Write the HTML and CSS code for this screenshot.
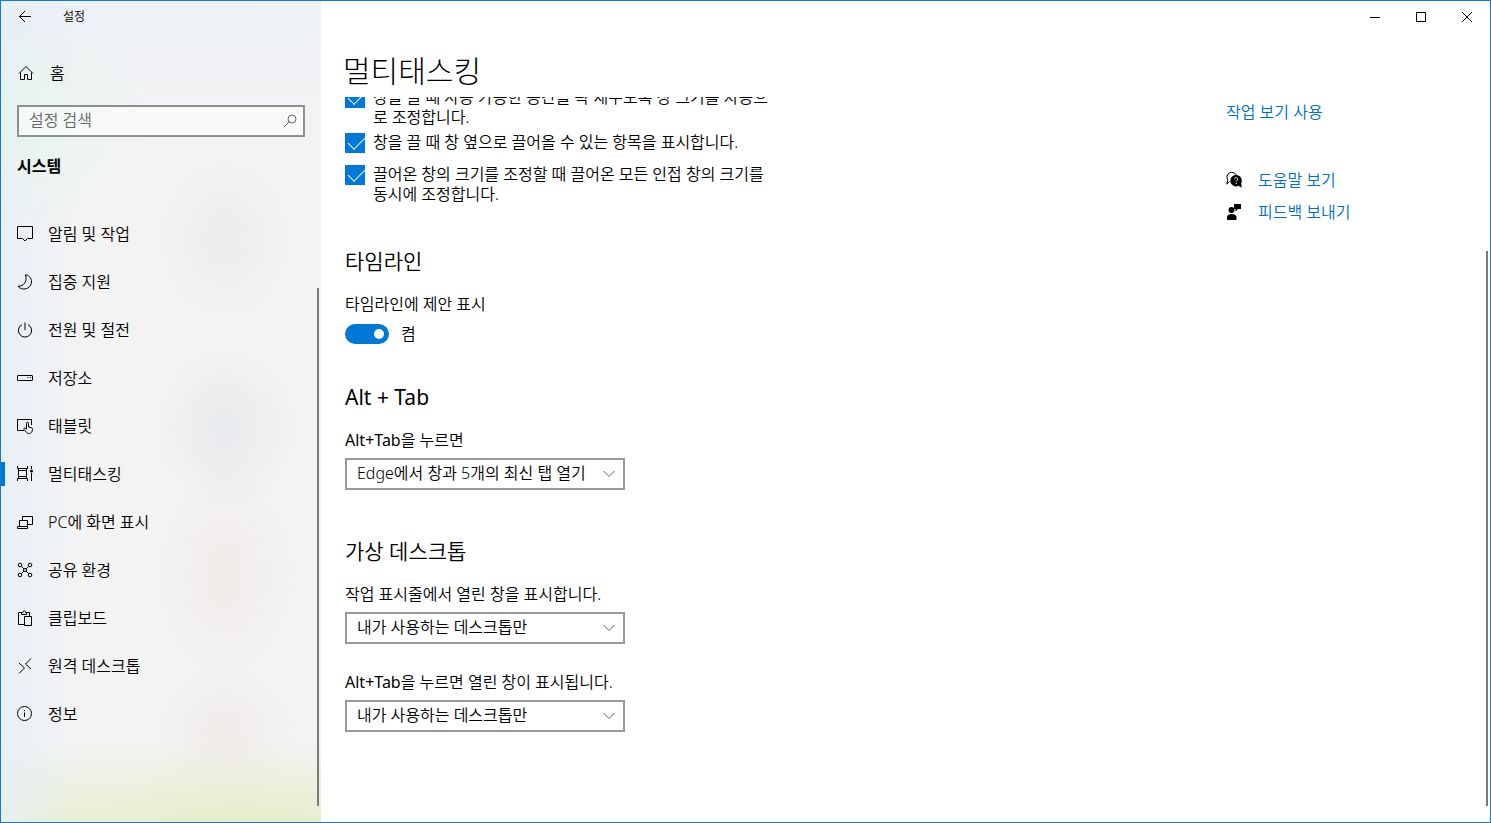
FILE: index.html
```
<!DOCTYPE html>
<html lang="ko">

<head>
    <meta charset="UTF-8">
    <meta name="viewport" content="width=device-width, initial-scale=1.0">
    <title>설정</title>
    <link rel="stylesheet" href="styles.css">
</head>

<body>
    <div class="window">
        <aside class="sidebar">
            <div class="titlebar">
                <button class="back-button" aria-label="뒤로">
                    <svg class="icon" viewBox="0 0 16 16"><path d="M14 7.5H2.5M8 2L2.5 7.5L8 13" /></svg>
                </button>
                <span class="app-name">설정</span>
            </div>

            <a class="home-link" href="#">
                <svg class="icon" viewBox="0 0 16 16"><path d="M1 8.5L8 1.5L15 8.5M2.5 7.5V14.5H6.5V9.5H9.5V14.5H13.5V7.5" /></svg>
                <span>홈</span>
            </a>

            <div class="search">
                <input type="text" class="search-input" placeholder="설정 검색" aria-label="설정 검색">
                <svg class="search-icon" viewBox="0 0 16 16"><circle cx="10" cy="6" r="4" /><path d="M7.2 8.8L2 14" /></svg>
            </div>

            <h2 class="nav-title">시스템</h2>

            <nav class="nav">
                <a class="nav-item" href="#">
                    <svg class="icon" viewBox="0 0 16 16"><path d="M.5 .5H15.5V12.5H10.5L8 15L5.5 12.5H.5Z" /></svg>
                    <span>알림 및 작업</span>
                </a>
                <a class="nav-item" href="#">
                    <svg class="icon" viewBox="0 0 16 16"><path d="M8.5 .8C13 1.5 15.3 5.5 14.3 9.5C13 15 5 17.3 1 12.2C7 12.5 10.5 7 8.5 .8Z" /></svg>
                    <span>집중 지원</span>
                </a>
                <a class="nav-item" href="#">
                    <svg class="icon" viewBox="0 0 16 16"><path d="M8 .5V8M5 2.6A6.6 6.6 0 1 0 11 2.6" /></svg>
                    <span>전원 및 절전</span>
                </a>
                <a class="nav-item" href="#">
                    <svg class="icon" viewBox="0 0 16 16"><rect x=".5" y="5.5" width="15" height="5" rx=".5" /><path d="M10.5 7.5H11.5M12.8 7.5H13.8" /></svg>
                    <span>저장소</span>
                </a>
                <a class="nav-item" href="#">
                    <svg class="icon" viewBox="0 0 16 16"><path d="M7 12.5H.5V1.5H14.5V7" /><path d="M9.5 11V5.2C9.5 3.8 11.5 3.8 11.5 5.2V9L14.5 9.7C15.3 10 15.6 10.5 15.5 11.3L15 13.5C14.3 15.9 10.5 16 9.3 14.3L7 11.3C6.5 10.3 7.6 9.6 8.3 10.2L9.5 11.3" /></svg>
                    <span>태블릿</span>
                </a>
                <a class="nav-item active" href="#">
                    <svg class="icon" viewBox="0 0 16 16"><path d="M.5 0V2.5H10.5V0M1.5 2.5V12.5M9.5 2.5V12.5M1.5 4.5H9.5M1.5 10.5H9.5M.5 15V12.5H10.5V15M14.5 0V3M14.5 7V15" /><circle cx="14.5" cy="5" r="1.5" class="solid" /></svg>
                    <span>멀티태스킹</span>
                </a>
                <a class="nav-item" href="#">
                    <svg class="icon" viewBox="0 0 16 16"><path d="M5.5 6V2.5H15.5V10.5H10.5M2.5 12V6.5H10.5V12M.5 12.5H10.5V14.5H.5Z" /></svg>
                    <span>PC에 화면 표시</span>
                </a>
                <a class="nav-item" href="#">
                    <svg class="icon" viewBox="0 0 16 16"><circle cx="3" cy="3" r="1.8" /><circle cx="13" cy="3" r="1.8" /><circle cx="3" cy="13" r="1.8" /><circle cx="13" cy="13" r="1.8" /><circle cx="8" cy="8" r="1.5" /><path d="M4.3 4.3L7 7M11.7 4.3L9 7M4.3 11.7L7 9M11.7 11.7L9 9" /></svg>
                    <span>공유 환경</span>
                </a>
                <a class="nav-item" href="#">
                    <svg class="icon" viewBox="0 0 16 16"><path d="M7 14.5H1.5V2.5H4.5M9.5 2.5H12.5V6M4.5 4.5V2.5H6C6 0 8.5 0 8.5 2.5H9.5V4.5ZM7.5 6.5H14.5V15.5H7.5Z" /></svg>
                    <span>클립보드</span>
                </a>
                <a class="nav-item" href="#">
                    <svg class="icon" viewBox="0 0 16 16"><path d="M2 5L7.5 10L2 15.5M14 .5L8.5 6L14 11" /></svg>
                    <span>원격 데스크톱</span>
                </a>
                <a class="nav-item" href="#">
                    <svg class="icon" viewBox="0 0 16 16"><circle cx="7.5" cy="7.5" r="7" /><path d="M7.5 6.5V11M7.5 4V5.2" /></svg>
                    <span>정보</span>
                </a>
            </nav>
            <div class="scroll-thumb nav-thumb"></div>
        </aside>

        <main class="main">
            <div class="window-controls">
                <button class="window-button" aria-label="최소화">
                    <svg viewBox="0 0 10 10"><path d="M0 5.5H10" /></svg>
                </button>
                <button class="window-button" aria-label="최대화">
                    <svg viewBox="0 0 10 10"><path d="M.5 .5H9.5V9.5H.5Z" /></svg>
                </button>
                <button class="window-button" aria-label="닫기">
                    <svg viewBox="0 0 10 10"><path d="M0 0L10 10M10 0L0 10" /></svg>
                </button>
            </div>

            <h1 class="page-title">멀티태스킹</h1>

            <div class="page">
                <div class="settings">
                    <div class="check-list">
                        <label class="check-item">
                            <input type="checkbox" class="checkbox" checked>
                            <span>창을 끌 때 사용 가능한 공간을 꽉 채우도록 창 크기를 자동으로 조정합니다.</span>
                        </label>
                        <label class="check-item">
                            <input type="checkbox" class="checkbox" checked>
                            <span>창을 끌 때 창 옆으로 끌어올 수 있는 항목을 표시합니다.</span>
                        </label>
                        <label class="check-item">
                            <input type="checkbox" class="checkbox" checked>
                            <span>끌어온 창의 크기를 조정할 때 끌어온 모든 인접 창의 크기를 동시에 조정합니다.</span>
                        </label>
                    </div>

                    <section class="section">
                        <h2 class="section-title">타임라인</h2>
                        <label class="field-label" for="timelineToggle">타임라인에 제안 표시</label>
                        <div class="toggle-row">
                            <input type="checkbox" role="switch" class="toggle" id="timelineToggle" checked>
                            <span>켬</span>
                        </div>
                    </section>

                    <section class="section">
                        <h2 class="section-title latin">Alt + Tab</h2>
                        <div class="field">
                            <label class="field-label" for="altTab"><span class="latin">Alt+Tab</span>을 누르면</label>
                            <div class="select-box">
                                <select id="altTab" class="select">
                                    <option>Edge에서 창과 5개의 최신 탭 열기</option>
                                </select>
                                <svg class="chevron" viewBox="0 0 12 8"><path d="M.5 1L6 6.5L11.5 1" /></svg>
                            </div>
                        </div>
                    </section>

                    <section class="section">
                        <h2 class="section-title">가상 데스크톱</h2>
                        <div class="field">
                            <label class="field-label" for="taskbarWindows">작업 표시줄에서 열린 창을 표시합니다.</label>
                            <div class="select-box">
                                <select id="taskbarWindows" class="select">
                                    <option>내가 사용하는 데스크톱만</option>
                                </select>
                                <svg class="chevron" viewBox="0 0 12 8"><path d="M.5 1L6 6.5L11.5 1" /></svg>
                            </div>
                        </div>
                        <div class="field">
                            <label class="field-label" for="altTabWindows"><span class="latin">Alt+Tab</span>을 누르면 열린 창이 표시됩니다.</label>
                            <div class="select-box">
                                <select id="altTabWindows" class="select">
                                    <option>내가 사용하는 데스크톱만</option>
                                </select>
                                <svg class="chevron" viewBox="0 0 12 8"><path d="M.5 1L6 6.5L11.5 1" /></svg>
                            </div>
                        </div>
                    </section>
                </div>

                <div class="links">
                    <a class="link" href="#">작업 보기 사용</a>
                    <div class="support">
                        <a class="link" href="#">
                            <svg class="icon" viewBox="0 0 16 16">
                                <path d="M3.6 9.3L.8 12.2L1.8 8A4.9 4.9 0 1 1 10.3 3.2" />
                                <path class="solid" d="M10.2 3A5.7 5.7 0 0 1 15.2 11.2L15.8 15.7L12.5 13.8A5.7 5.7 0 1 1 10.2 3Z" />
                                <path class="mark" d="M8.6 7C8.6 5 11.9 5 11.9 7C11.9 8.2 10.3 8.2 10.3 9.6M10.3 10.8V12" />
                            </svg>
                            <span>도움말 보기</span>
                        </a>
                        <a class="link" href="#">
                            <svg class="icon" viewBox="0 0 16 16">
                                <path class="fill" d="M8 0H15V5H12L9.5 7.5V5H8Z" />
                                <circle class="fill" cx="5.5" cy="6" r="3" />
                                <path class="fill" d="M1 16V13C1 9 10.5 9 10.5 13V16Z" />
                            </svg>
                            <span>피드백 보내기</span>
                        </a>
                    </div>
                </div>
            </div>
            <div class="scroll-thumb page-thumb"></div>
        </main>
    </div>
</body>

</html>
```

FILE: styles.css
```
* {
    box-sizing: border-box;
    margin: 0;
    padding: 0;
}

body {
    background-color: #fff;
    color: #000;
    font-family: 'Noto Sans', 'Noto Sans CJK KR', sans-serif;
    font-size: 16px;
    font-weight: 350;
    line-height: 20px;
}

a {
    color: inherit;
    text-decoration: none;
}

button {
    background: none;
    border: none;
}

input,
select {
    font: inherit;
}

svg {
    fill: none;
    stroke: currentColor;
    stroke-width: 1;
    flex-shrink: 0;
}

.icon {
    width: 16px;
    height: 16px;
    overflow: visible;
}

.window {
    display: flex;
    height: 100vh;
    border: 1px solid #1979ca;
    overflow: hidden;
}

/* Sidebar */
.sidebar {
    position: relative;
    flex: 0 0 320px;
    background-color: #f3f3f4;
    background-image:
        radial-gradient(ellipse 150px 70px at 75% 100%, rgba(230, 233, 190, 0.4), transparent),
        radial-gradient(ellipse 120px 110px at 12% 15%, rgba(228, 246, 234, 0.6), transparent),
        radial-gradient(ellipse 70px 85px at 70% 29%, rgba(232, 230, 233, 0.6), transparent),
        radial-gradient(ellipse 70px 85px at 70% 52%, rgba(226, 230, 233, 0.7), transparent),
        radial-gradient(ellipse 70px 110px at 70% 70%, rgba(240, 232, 228, 0.7), transparent),
        radial-gradient(ellipse 70px 70px at 70% 89%, rgba(238, 230, 226, 0.6), transparent),
        linear-gradient(to right, rgba(230, 239, 246, 0.8), transparent 25%),
        linear-gradient(to top, rgba(233, 239, 210, 1), transparent 10%),
        linear-gradient(to bottom, rgba(236, 240, 246, 0.9), transparent 15%);
}

.titlebar {
    display: flex;
    align-items: center;
    height: 32px;
    font-size: 12px;
}

.back-button {
    display: flex;
    padding: 8px 16px;
    margin-right: 14px;
}

.home-link {
    display: flex;
    align-items: center;
    gap: 16px;
    height: 48px;
    margin-top: 16px;
    padding: 0 17px;
}

.search {
    position: relative;
    margin: 8px 16px 0;
}

.search-input {
    display: block;
    width: 100%;
    height: 32px;
    padding: 0 36px 2px 10px;
    border: 2px solid #8e9190;
    background-color: rgba(255, 255, 255, 0.5);
    outline: none;
}

.search-input::placeholder {
    color: #666;
    opacity: 1;
}

.search-icon {
    position: absolute;
    top: 8px;
    right: 7px;
    width: 16px;
    height: 16px;
    color: #666;
}

.nav-title {
    padding: 19px 16px 0;
    font-size: 16px;
    font-weight: 600;
}

.nav {
    margin-top: 34px;
}

.nav-item {
    position: relative;
    display: flex;
    align-items: center;
    gap: 15px;
    height: 48px;
    padding: 0 16px;
}

.nav-item.active::before {
    content: '';
    position: absolute;
    left: 0;
    top: 12px;
    width: 4px;
    height: 24px;
    background-color: #0078d7;
}

/* Thin overlay scroll bars */
.scroll-thumb {
    position: absolute;
    right: 2px;
    bottom: 16px;
    width: 2px;
    background-color: #7a7a7a;
}

.nav-thumb {
    top: 35%;
}

.page-thumb {
    top: calc(30% + 4px);
}

/* Main area */
.main {
    position: relative;
    display: flex;
    flex: 1;
    flex-direction: column;
    min-width: 0;
    background-color: #fff;
}

.window-controls {
    display: flex;
    justify-content: flex-end;
    height: 32px;
}

.window-button {
    display: flex;
    align-items: center;
    justify-content: center;
    width: 46px;
}

.window-button svg {
    width: 10px;
    height: 10px;
    overflow: visible;
}

.page-title {
    padding: 18px 22px 6px;
    font-size: 30px;
    font-weight: 300;
    line-height: 40px;
}

.page {
    display: flex;
    flex: 1;
    justify-content: space-between;
    min-height: 0;
    padding: 0 24px;
    overflow: hidden;
}

/* The list is scrolled a little, so its first row runs under the title */
.settings {
    max-width: 432px;
    margin-top: -10px;
}

.check-list {
    margin-bottom: 38px;
}

.check-item {
    display: flex;
    align-items: flex-start;
    gap: 8px;
    min-height: 32px;
    padding-bottom: 5px;
}

.checkbox {
    appearance: none;
    position: relative;
    flex-shrink: 0;
    width: 20px;
    height: 20px;
    margin-top: 1px;
    background-color: #0078d7;
}

.checkbox:checked::after {
    content: '';
    position: absolute;
    left: 7px;
    top: 0;
    width: 8px;
    height: 15px;
    border: solid #fff;
    border-width: 0 1px 1px 0;
    transform: rotate(45deg);
}

.section {
    margin-bottom: 37px;
}

.section-title {
    margin-bottom: 19px;
    font-size: 21px;
    font-weight: 350;
    line-height: 28px;
}

.latin {
    font-weight: 400;
}

.field {
    margin-bottom: 28px;
}

.field:last-child {
    margin-bottom: 47px;
}

.field-label {
    display: block;
    margin-bottom: 8px;
}

.toggle-row {
    display: flex;
    align-items: center;
    gap: 12px;
    min-height: 24px;
}

.toggle {
    appearance: none;
    position: relative;
    width: 44px;
    height: 20px;
    border-radius: 10px;
    background-color: #0078d7;
}

.toggle::after {
    content: '';
    position: absolute;
    top: 5px;
    left: 5px;
    width: 10px;
    height: 10px;
    border-radius: 50%;
    background-color: #fff;
}

.toggle:checked::after {
    left: 29px;
}

.select-box {
    position: relative;
    width: 280px;
}

.select {
    appearance: none;
    display: block;
    width: 100%;
    height: 32px;
    padding: 0 30px 2px 10px;
    border: 2px solid #999;
    border-radius: 0;
    background-color: #fff;
    color: #000;
}

.chevron {
    position: absolute;
    top: 12px;
    right: 10px;
    width: 12px;
    height: 8px;
    color: #666;
    pointer-events: none;
}

/* Related links */
.links {
    flex: 0 0 240px;
    padding-top: 5px;
    color: #006fc9;
}

.link {
    display: flex;
    align-items: center;
    gap: 16px;
}

.link .icon {
    color: #000;
}

.link .solid,
.link .fill,
.nav-item .solid {
    fill: currentColor;
    stroke: none;
}

.link .mark {
    stroke: #fff;
}

.support {
    display: flex;
    flex-direction: column;
    gap: 12px;
    margin-top: 48px;
}
```
